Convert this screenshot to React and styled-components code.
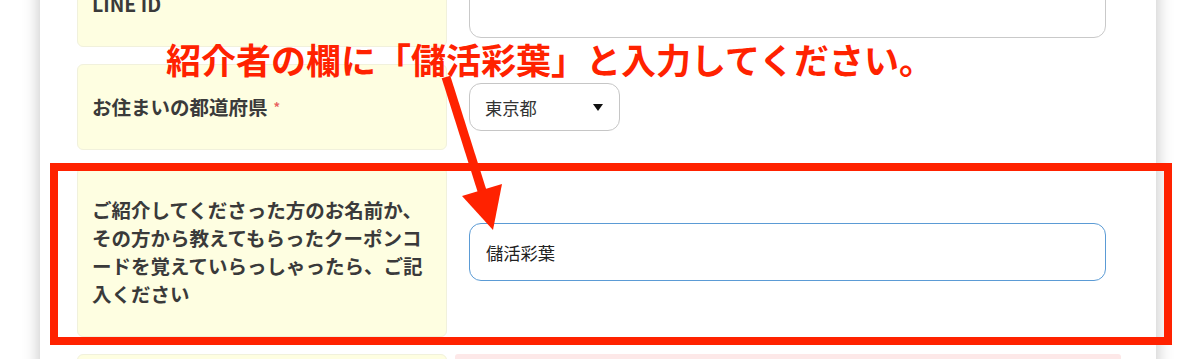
import React from "react";
import styled, { createGlobalStyle } from "styled-components";

const GlobalStyle = createGlobalStyle`
  html, body {
    margin: 0;
    padding: 0;
    background: #fff;
  }
  body {
    font-family: "Noto Sans CJK JP", "Noto Sans", sans-serif;
  }
`;

const Page = styled.div`
  position: relative;
  width: 1200px;
  height: 359px;
  overflow: hidden;
  background: #fff;
`;

const Card = styled.div`
  margin-left: 40px;
  width: 1116px;
  box-sizing: border-box;
  padding: 0 35px 40px 37px;
  background: #fff;
  box-shadow: 0 0 16px rgba(0, 0, 0, 0.25);
`;

const Form = styled.div`
  display: flex;
  flex-direction: column;
  gap: 17px;
  margin-top: -39px;
`;

const Row = styled.div`
  display: grid;
  grid-template-columns: 370px 1fr;
  column-gap: 8px;
  min-height: 86px;
`;

const LabelCell = styled.div`
  display: flex;
  align-items: center;
  box-sizing: border-box;
  padding: 28px 20px 28px 14px;
  background: #fefee1;
  border: 1px solid #f1f1dc;
  border-radius: 6px;
  color: #3a3a3a;
  font-size: 19.5px;
  font-weight: 700;
  line-height: 28px;
  line-break: loose;
`;

const Required = styled.span`
  color: #e86262;
  font-size: 13px;
  margin-left: 6px;
`;

const FieldCell = styled.div`
  display: flex;
  align-items: center;
  padding: 0 15px 0 14px;
  background: ${(p) => (p.$error ? "#fde8e8" : "transparent")};
  border-radius: 3px;
`;

const TextInput = styled.input`
  width: 100%;
  height: ${(p) => p.$h || 58}px;
  box-sizing: border-box;
  padding: 0 16px;
  border: ${(p) => (p.$active ? "1.5px solid #5b9bd5" : "1px solid #c9c9c9")};
  border-radius: 12px;
  background: #fff;
  color: #222;
  font-family: "Noto Sans CJK JP", sans-serif;
  font-size: 17.3px;
  outline: none;
`;

const SelectBox = styled.div`
  width: 151px;
  height: 48px;
  box-sizing: border-box;
  display: flex;
  align-items: center;
  justify-content: space-between;
  padding: 0 16px 0 15px;
  border: 1px solid #c6c6c6;
  border-radius: 12px;
  color: #333;
  font-size: 17.3px;
`;

const Caret = styled.span`
  width: 0;
  height: 0;
  border-left: 5.5px solid transparent;
  border-right: 5.5px solid transparent;
  border-top: 7px solid #111;
`;

const Annotation = styled.div`
  position: absolute;
  inset: 0;
  pointer-events: none;
`;

const Headline = styled.div`
  position: absolute;
  left: 166px;
  top: 41px;
  color: #ff2200;
  font-size: 35px;
  font-weight: 700;
  line-height: 35px;
  white-space: nowrap;
`;

const HighlightBox = styled.div`
  position: absolute;
  left: 50px;
  top: 163px;
  width: 1122px;
  height: 182px;
  box-sizing: border-box;
  border: 8px solid #ff2200;
`;

const ArrowLayer = styled.svg`
  position: absolute;
  left: 0;
  top: 0;
`;

export default function App() {
  return (
    <Page lang="ja">
      <GlobalStyle />
      <Card>
        <Form>
          <Row>
            <LabelCell>LINE ID</LabelCell>
            <FieldCell>
              <TextInput $h={68} readOnly />
            </FieldCell>
          </Row>
          <Row>
            <LabelCell>
              お住まいの都道府県<Required>*</Required>
            </LabelCell>
            <FieldCell>
              <SelectBox>
                東京都
                <Caret />
              </SelectBox>
            </FieldCell>
          </Row>
          <Row>
            <LabelCell>
              ご紹介してくださった方のお名前か、その方から教えてもらったクーポンコードを覚えていらっしゃったら、ご記入ください
            </LabelCell>
            <FieldCell>
              <TextInput $active defaultValue="儲活彩葉" />
            </FieldCell>
          </Row>
          <Row>
            <LabelCell />
            <FieldCell $error />
          </Row>
        </Form>
      </Card>
      <Annotation>
        <Headline>紹介者の欄に「儲活彩葉」と入力してください。</Headline>
        <HighlightBox />
        <ArrowLayer width="1200" height="359" viewBox="0 0 1200 359">
          <line x1="446" y1="77" x2="483" y2="194" stroke="#ff2200" strokeWidth="9" />
          <polygon points="462,196 502,184 493,230" fill="#ff2200" />
        </ArrowLayer>
      </Annotation>
    </Page>
  );
}
